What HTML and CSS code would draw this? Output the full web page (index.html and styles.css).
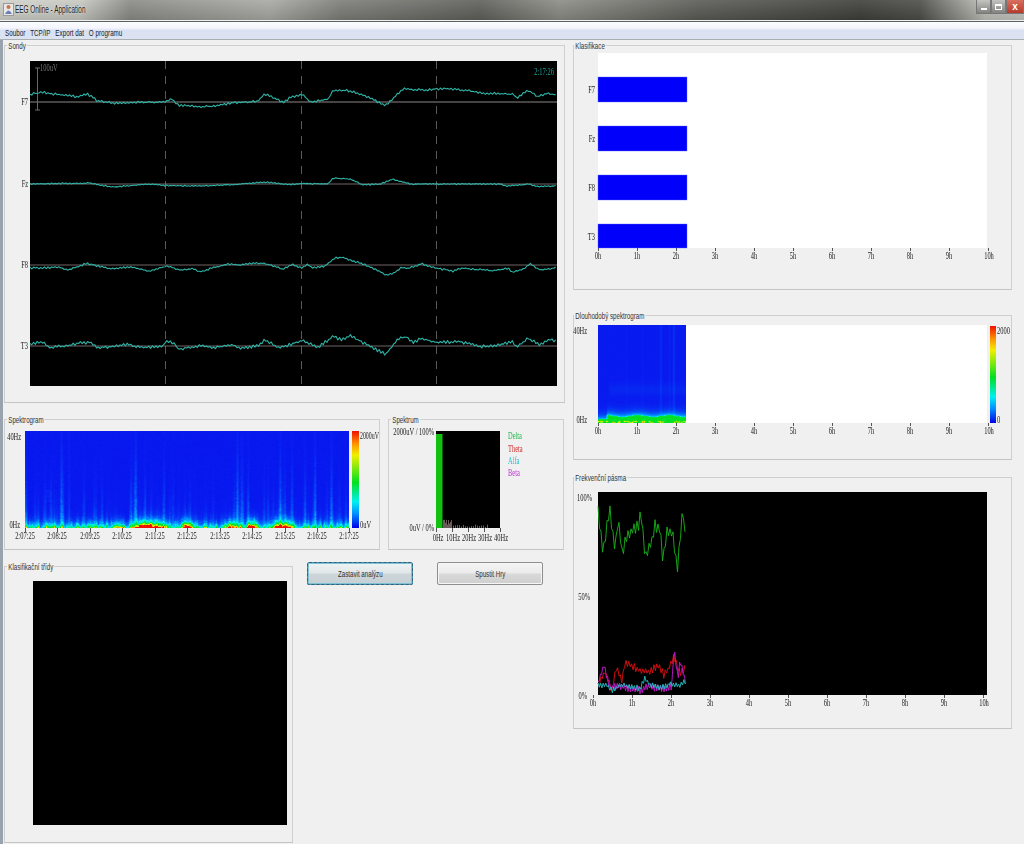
FILE: index.html
```html
<!DOCTYPE html>
<html lang="cs">
<head>
<meta charset="utf-8">
<title>EEG Online - Application</title>
<link rel="stylesheet" href="styles.css">
</head>
<body>
<div class="window">
  <header class="titlebar">
    <svg class="appicon" width="11" height="13" viewBox="0 0 11 13"><rect x="0.5" y="0.5" width="10" height="12" fill="#e8e8e8" stroke="#9a9a9a"/><circle cx="5.5" cy="4" r="2" fill="#c9764a"/><path d="M2 11 Q5.5 4 9 11Z" fill="#6a7fb5"/></svg>
    <span class="title">EEG Online - Application</span>
    <div class="winbtns">
      <span class="wb wb-min"><i class="g-min"></i></span>
      <span class="wb wb-max"><i class="g-max"></i></span>
      <span class="wb wb-close">x</span>
    </div>
  </header>
  <nav class="menubar"><div class="menu-items"><span>Soubor</span><span>TCP/IP</span><span>Export dat</span><span>O programu</span></div></nav>
  <main class="content">
    <div class="col-left">
      <section class="group g-sondy">
        <h2>Sondy</h2>
        <svg class="chart" viewBox="5 46 559 356">
          <rect x="30" y="61" width="527" height="325" fill="#000"/>
          <g class="dash"><path d="M165.5 61V386M301.5 61V386M436.5 61V386"/></g>
          <path class="base1" d="M30 102H557"/>
          <path class="base2" d="M30 184H557M30 265H557M30 346H557"/>
          <path class="scale" d="M37.5 68V110M35 68H40M35 110H40"/>
          <g id="traces"></g>
          <text class="lb r" x="28" y="105">F7</text>
          <text class="lb r" x="28" y="187">Fz</text>
          <text class="lb r" x="28" y="268">F8</text>
          <text class="lb r" x="28" y="349">T3</text>
          <text class="lb l gray" x="40" y="71">100uV</text>
          <text class="lb r teal" x="554" y="75">2:17:26</text>
        </svg>
      </section>
      <div class="row-mid">
        <section class="group g-spec">
          <h2>Spektrogram</h2>
          <svg class="chart" viewBox="5 420 374 129">
            <defs>
              <linearGradient id="jet" x1="0" y1="1" x2="0" y2="0">
                <stop offset="0" stop-color="#0000e8"/><stop offset=".15" stop-color="#0090ff"/><stop offset=".27" stop-color="#00f0f0"/><stop offset=".47" stop-color="#00e020"/><stop offset=".75" stop-color="#f0f000"/><stop offset=".87" stop-color="#ff9000"/><stop offset="1" stop-color="#f01000"/>
              </linearGradient>
            </defs>
            <foreignObject x="25" y="431" width="324" height="97"><canvas id="spec1" class="fo" width="324" height="97"></canvas></foreignObject>
            <rect x="352" y="431" width="7" height="97" fill="url(#jet)"/>
            <path class="tick" d="M25.5 528V532M57.5 528V532M90.5 528V532M122.5 528V532M155.5 528V532M187.5 528V532M220.5 528V532M252.5 528V532M285.5 528V532M317.5 528V532M349.5 528V532"/>
            <text class="lb r" x="21" y="440">40Hz</text>
            <text class="lb r" x="20" y="528">0Hz</text>
            <text class="lb l tight" x="360" y="439">2000uV</text>
            <text class="lb l" x="360" y="528">0uV</text>
            <text class="lb" x="25" y="539">2:07:25</text><text class="lb" x="57" y="539">2:08:25</text><text class="lb" x="90" y="539">2:09:25</text><text class="lb" x="122" y="539">2:10:25</text><text class="lb" x="155" y="539">2:11:25</text><text class="lb" x="187" y="539">2:12:25</text><text class="lb" x="220" y="539">2:13:25</text><text class="lb" x="252" y="539">2:14:25</text><text class="lb" x="285" y="539">2:15:25</text><text class="lb" x="317" y="539">2:16:25</text><text class="lb" x="349" y="539">2:17:25</text>
          </svg>
        </section>
        <section class="group g-spektrum">
          <h2>Spektrum</h2>
          <svg class="chart" viewBox="389 420 174 129">
            <rect x="436" y="431" width="64" height="97" fill="#000"/>
            <rect x="436" y="434" width="6.5" height="94" fill="#12c012"/>
            <path id="specbars" class="sbars" d=""/>
            <path class="tick" d="M436.5 528V532M452.5 528V532M468.5 528V532M484.5 528V532M500.5 528V532"/>
            <text class="lb r" x="434" y="435">2000uV / 100%</text>
            <text class="lb r" x="434" y="531">0uV / 0%</text>
            <text class="lb" x="438" y="541">0Hz</text><text class="lb" x="453" y="541">10Hz</text><text class="lb" x="469" y="541">20Hz</text><text class="lb" x="485" y="541">30Hz</text><text class="lb" x="501" y="541">40Hz</text>
            <text class="lb l c-delta" x="508" y="439">Delta</text>
            <text class="lb l c-theta" x="508" y="452">Theta</text>
            <text class="lb l c-alfa" x="508" y="464">Alfa</text>
            <text class="lb l c-beta" x="508" y="476">Beta</text>
          </svg>
        </section>
      </div>
      <div class="row-low">
        <section class="group g-tridy">
          <h2>Klasifikační třídy</h2>
          <div class="blackplot"></div>
        </section>
        <div class="actions">
          <button class="btn btn-focus" type="button"><span>Zastavit analýzu</span></button>
          <button class="btn" type="button"><span>Spustit Hry</span></button>
        </div>
      </div>
    </div>
    <div class="col-right">
      <section class="group g-klas">
        <h2>Klasifikace</h2>
        <svg class="chart" viewBox="574 46 437 243">
          <rect x="598" y="53" width="389" height="195" fill="#fff"/>
          <rect class="bar" x="598" y="77" width="89" height="25"/>
          <rect class="bar" x="598" y="126" width="89" height="25"/>
          <rect class="bar" x="598" y="175" width="89" height="25"/>
          <rect class="bar" x="598" y="224" width="89" height="24"/>
          <path class="tick" d="M598.5 248V251M637.5 248V251M676.5 248V251M715.5 248V251M754.5 248V251M793.5 248V251M832.5 248V251M871.5 248V251M910.5 248V251M949.5 248V251M988.5 248V251"/>
          <text class="lb r" x="595" y="93">F7</text><text class="lb r" x="595" y="142">Fz</text><text class="lb r" x="595" y="191">F8</text><text class="lb r" x="595" y="240">T3</text>
          <text class="lb" x="598" y="259">0h</text><text class="lb" x="637" y="259">1h</text><text class="lb" x="676" y="259">2h</text><text class="lb" x="715" y="259">3h</text><text class="lb" x="754" y="259">4h</text><text class="lb" x="793" y="259">5h</text><text class="lb" x="832" y="259">6h</text><text class="lb" x="871" y="259">7h</text><text class="lb" x="910" y="259">8h</text><text class="lb" x="949" y="259">9h</text><text class="lb" x="989" y="259">10h</text>
        </svg>
      </section>
      <section class="group g-long">
        <h2>Dlouhodobý spektrogram</h2>
        <svg class="chart" viewBox="574 316 437 143">
          <rect x="598" y="325" width="389" height="98" fill="#fff"/>
          <foreignObject x="598" y="325" width="88" height="98"><canvas id="spec2" class="fo" width="88" height="98"></canvas></foreignObject>
          <rect x="990" y="326" width="6" height="97" fill="url(#jet)"/>
          <path class="tick" d="M598.5 423V426M637.5 423V426M676.5 423V426M715.5 423V426M754.5 423V426M793.5 423V426M832.5 423V426M871.5 423V426M910.5 423V426M949.5 423V426M988.5 423V426"/>
          <text class="lb r" x="587" y="334">40Hz</text><text class="lb r" x="587" y="423">0Hz</text>
          <text class="lb l" x="997" y="334">2000</text><text class="lb l" x="997" y="423">0</text>
          <text class="lb" x="598" y="434">0h</text><text class="lb" x="637" y="434">1h</text><text class="lb" x="676" y="434">2h</text><text class="lb" x="715" y="434">3h</text><text class="lb" x="754" y="434">4h</text><text class="lb" x="793" y="434">5h</text><text class="lb" x="832" y="434">6h</text><text class="lb" x="871" y="434">7h</text><text class="lb" x="910" y="434">8h</text><text class="lb" x="949" y="434">9h</text><text class="lb" x="989" y="434">10h</text>
        </svg>
      </section>
      <section class="group g-freq">
        <h2>Frekvenční pásma</h2>
        <svg class="chart" viewBox="574 478 437 250">
          <rect x="598" y="492" width="389" height="203" fill="#000"/>
          <g id="bands"></g>
          <path class="tick" d="M593.5 695V698M632.5 695V698M671.5 695V698M710.5 695V698M749.5 695V698M788.5 695V698M827.5 695V698M866.5 695V698M905.5 695V698M944.5 695V698M983.5 695V698"/>
          <text class="lb r" x="592" y="501">100%</text><text class="lb r" x="590" y="600">50%</text><text class="lb r" x="587" y="699">0%</text>
          <text class="lb" x="593" y="706">0h</text><text class="lb" x="632" y="706">1h</text><text class="lb" x="671" y="706">2h</text><text class="lb" x="710" y="706">3h</text><text class="lb" x="749" y="706">4h</text><text class="lb" x="788" y="706">5h</text><text class="lb" x="827" y="706">6h</text><text class="lb" x="866" y="706">7h</text><text class="lb" x="905" y="706">8h</text><text class="lb" x="944" y="706">9h</text><text class="lb" x="984" y="706">10h</text>
        </svg>
      </section>
    </div>
  </main>
</div>
<script src="charts.js"></script>
</body>
</html>
```
FILE: styles.css
```css
* { box-sizing: border-box; }
html, body { margin: 0; padding: 0; }
body { width: 1024px; height: 844px; overflow: hidden; background: #f0f0f0; font-family: "Liberation Sans", sans-serif; font-size: 9.5px; color: #2a2a2a; }
.window { display: flex; flex-direction: column; height: 844px; }

.titlebar { display: flex; align-items: flex-start; height: 20px; padding: 3px 0 0 3px; flex: none; background:
  linear-gradient(to bottom, rgba(255,255,255,.1), rgba(0,0,0,.12)),
  linear-gradient(to right, #d2d2cc 0, #c8c8c2 80px, #8a8a86 130px, #a9a9a4 270px, #7d7d78 340px, #5f5f5a 480px, #8c8c86 560px, #5a5a55 700px, #3e3e3a 860px, #4c4c48 920px, #c0c0ba 985px, #c8c8c2 1024px); }
.appicon { flex: none; }
.title { display: inline-block; margin: 2px 0 0 1px; font-size: 10px; line-height: 10px; color: #222; text-shadow: 0 0 3px #fff; white-space: nowrap; transform: scaleX(.64); transform-origin: left center; }
.winbtns { display: flex; margin-left: auto; margin-top: -3px; height: 14px; }
.wb { display: flex; align-items: center; justify-content: center; height: 14px; width: 15px; border: 1px solid #777; border-top: 0; background: linear-gradient(to bottom, #c4c4c0, #82827e); }
.wb-close { width: 18px; background: linear-gradient(to bottom, #d8705f, #b83a2c); color: #fff; font: bold 10px "Liberation Sans", sans-serif; }
.g-min { display: block; width: 6px; height: 2px; margin-top: 5px; background: #fff; }
.g-max { display: block; width: 7px; height: 6px; border: 1px solid #fff; border-top-width: 2px; }

.menubar { flex: none; height: 19px; padding: 5px 0 0 5px; margin-top: 1px; line-height: 11px; color: #222; border-top: 1px solid #5f6163; background: linear-gradient(to bottom, #fbfcff 0, #f4f6fd 35%, #d9e1f2 50%, #dce3f3 100%); border-bottom: 1px solid #a9aeae; }
.menu-items { display: flex; gap: 7.5px; transform: scaleX(.66); transform-origin: left center; white-space: nowrap; }

.content { flex: 1; min-height: 0; display: flex; gap: 8px; padding: 5px 0 0 1px; border-left: 3px solid #98a3ad; }
.col-left { width: 561px; flex: none; display: flex; flex-direction: column; }
.col-right { width: 439px; flex: none; display: flex; flex-direction: column; }

.group { position: relative; flex: none; border: 1px solid #cfcfcf; border-bottom-color: #c4c4c4; }
.group h2 { position: absolute; left: 2px; top: -5px; margin: 0; padding: 0 2px; font-size: 9.5px; line-height: 10px; font-weight: normal; color: #333; background: #f0f0f0; white-space: nowrap; transform: scaleX(.65); transform-origin: left center; }
.col-right .group h2 { left: 0; }
.chart { display: block; width: 100%; height: 100%; overflow: visible; will-change: transform; }

.g-sondy { height: 358px; }
.row-mid { display: flex; gap: 8px; margin-top: 16px; }
.g-spec { width: 376px; height: 131px; }
.g-spektrum { width: 176px; height: 131px; }
.row-low { display: flex; align-items: flex-start; margin-top: 12px; }
.g-tridy { width: 289px; height: 277px; margin-top: 4px; padding: 14px 5px 0 28px; }
.blackplot { width: 254px; height: 244px; background: #000; }
.actions { display: flex; gap: 24px; margin-left: 14px; }
.btn { width: 106px; height: 23px; padding: 0; border: 1px solid #8e8e8e; border-radius: 2px; font: inherit; color: #333; background: linear-gradient(to bottom, #f4f4f4 0, #ececec 45%, #d8d8d8 55%, #cfcfcf 100%); box-shadow: inset 0 0 0 1px #f6f6f6; }
.btn span { display: inline-block; white-space: nowrap; transform: scaleX(.65); }
.btn-focus { border: 1px solid #3f98ad; box-shadow: inset 0 0 0 1px #7dc3d4; outline: 1px dashed #3a5f7a; outline-offset: -1px; background: linear-gradient(to bottom, #eef3f5 0, #e2e8ea 45%, #cdd5d9 55%, #c6d0d5 100%); }

.g-klas { height: 245px; }
.g-long { height: 145px; margin-top: 25px; }
.g-freq { height: 252px; margin-top: 17px; }

.lb { font-family: "Liberation Serif", serif; font-size: 9.5px; fill: #222; text-anchor: middle; transform: scaleX(.68); transform-box: fill-box; transform-origin: center; }
.lb.r { text-anchor: end; transform-origin: right center; }
.lb.l { text-anchor: start; transform-origin: left center; }
.lb.tight { transform: scaleX(.62); }
.gray { fill: #777; }
.teal { fill: #1fa59b; }
.c-delta { fill: #22b84a; }
.c-theta { fill: #d03030; }
.c-alfa { fill: #25c0d0; }
.c-beta { fill: #c030d0; }

.dash path { fill: none; stroke: #5a5a5a; stroke-width: 1; stroke-dasharray: 8 7; }
.base1 { stroke: #5e5a5a; stroke-width: 1.4; fill: none; }
.base2 { stroke: #8d7f80; stroke-width: .8; fill: none; }
.scale { stroke: #6a6a6a; stroke-width: 1; fill: none; }
.tick { stroke: #555; stroke-width: 1; fill: none; }
.bar { fill: #0000fb; stroke: #5a6cff; stroke-width: .4; }
.sbars { stroke: #6b5c5c; stroke-width: 1; fill: none; }
.fo { display: block; filter: blur(.5px); }
.trace { fill: none; stroke: #2fb3a6; stroke-width: 1.1; stroke-linejoin: round; }
.band { fill: none; stroke-width: .9; stroke-linejoin: miter; }
.band-delta { stroke: #18b41a; }
.band-theta { stroke: #e01010; }
.band-alfa { stroke: #25c4c8; }
.band-beta { stroke: #c818d0; }
```
FILE: charts.js
```js
(function () {
  var NS = 'http://www.w3.org/2000/svg';
  var seed = 12345;
  function rnd() { seed = (seed * 16807) % 2147483647; return seed / 2147483647; }
  function lerp(pts, x) {
    for (var i = 1; i < pts.length; i++) {
      if (x <= pts[i][0]) {
        var a = pts[i - 1], b = pts[i];
        return a[1] + (b[1] - a[1]) * (x - a[0]) / (b[0] - a[0]);
      }
    }
    return pts[pts.length - 1][1];
  }
  function poly(parent, cls, points) {
    var p = document.createElementNS(NS, 'polyline');
    p.setAttribute('class', cls);
    p.setAttribute('points', points.join(' '));
    parent.appendChild(p);
  }

  var F7 = [[30,94.3],[43,92.3],[53,94],[67,95.7],[77,96.7],[88,94.3],[97,100.7],[113,103.3],[133,102.3],[163,102.3],[172,99.3],[178,105],[200,106.7],[217,106],[233,102.7],[257,101.3],[265,94.3],[277,99.3],[283,102.7],[290,97.7],[302,94.3],[310,101.7],[328,99.3],[333,90.7],[350,90.7],[367,96.7],[385,105.7],[395,96.7],[403,89],[423,90],[445,88.3],[467,90.7],[487,93.3],[513,94.3],[517,98.3],[528,90],[538,96.7],[548,93.3],[557,95]];
  var Fz = [[30,184],[90,183],[100,185],[113,187],[150,184],[163,185.5],[200,186],[217,185.5],[233,184.5],[265,182],[290,184.5],[302,183.5],[328,184],[333,178.3],[350,179],[363,185],[380,184],[392,179.3],[410,184],[500,184],[505,186],[530,184],[535,186.5],[557,186]];
  var F8 = [[30,268],[40,268],[60,267.3],[68,270],[87,263.3],[100,266.7],[113,269],[130,266.7],[148,271],[163,267.3],[167,266],[180,270],[193,269],[200,271.7],[217,266.7],[228,264],[240,265.3],[255,262.7],[267,264],[283,269.3],[293,264.3],[302,268.3],[307,264],[313,268],[325,266],[335,257.7],[343,257.7],[363,264],[377,270],[386,275.3],[395,272.3],[402,267.3],[408,268.3],[422,264],[437,268.3],[453,271],[462,268.3],[493,270.7],[508,268.3],[512,272.3],[523,269.3],[530,263.3],[540,270],[557,267.7]];
  var T3 = [[30,344],[42,341.7],[50,347.7],[67,345.7],[78,343.3],[90,342.3],[97,347.7],[113,346.7],[127,344.7],[143,347.7],[163,346],[166,340.7],[175,343.3],[178,349],[200,346],[217,347.3],[233,344.3],[240,348.3],[258,345.7],[265,340],[277,346.7],[283,346.7],[302,340.7],[318,347.3],[333,336.7],[342,340],[351,335.7],[367,345],[386,354.3],[398,338.3],[407,336.7],[413,342.7],[422,338.3],[437,342.3],[460,341.7],[480,346.7],[500,345],[512,341.7],[517,346.7],[528,338.3],[540,345],[550,339],[557,341.7]];
  var g = document.getElementById('traces');
  [[F7,1.3],[Fz,.7],[F8,1],[T3,1.6]].forEach(function (t) {
    var pts = [], n = 0;
    for (var x = 30; x <= 557; x += 1.8) {
      var sign = n++ % 2 ? 1 : -1;
      pts.push(x.toFixed(2) + ',' + (lerp(t[0], x) + sign * rnd() * t[1]).toFixed(1));
    }
    poly(g, 'trace', pts);
  });

  var sb = '';
  for (var i = 0; i < 46; i += 1) {
    var bx = 443.5 + i;
    if (i % 2 && i > 8) continue;
    var hb = i < 9 ? 3 + rnd() * 6 : 1 + rnd() * 2.5;
    sb += 'M' + bx + ' 528V' + (528 - hb).toFixed(1);
  }
  document.getElementById('specbars').setAttribute('d', sb);

  var stops = [[0,0,0,225],[.04,8,28,240],[.15,0,144,255],[.27,0,240,240],[.47,0,224,32],[.75,240,240,0],[.87,255,144,0],[1,240,16,0]];
  function jet(v) {
    v = Math.max(0, Math.min(1, v));
    for (var i = 1; i < stops.length; i++) {
      if (v <= stops[i][0]) {
        var a = stops[i - 1], b = stops[i], t = (v - a[0]) / (b[0] - a[0]);
        return [a[1] + (b[1] - a[1]) * t, a[2] + (b[2] - a[2]) * t, a[3] + (b[3] - a[3]) * t];
      }
    }
    return [240, 16, 0];
  }
  function paint(id, w, h, fn) {
    var c = document.getElementById(id), ctx = c.getContext('2d');
    var img = ctx.createImageData(w, h), vals = [];
    for (var y = 0; y < h; y++) for (var x = 0; x < w; x++) vals[y * w + x] = fn(x, h - 1 - y);
    for (y = 0; y < h; y++) for (x = 0; x < w; x++) {
      var l = vals[y * w + Math.max(0, x - 1)], m = vals[y * w + x], r = vals[y * w + Math.min(w - 1, x + 1)];
      var up = vals[Math.max(0, y - 1) * w + x], dn = vals[Math.min(h - 1, y + 1) * w + x];
      var col = jet(l * .2 + m * .4 + r * .2 + up * .1 + dn * .1), o = (y * w + x) * 4;
      img.data[o] = col[0]; img.data[o + 1] = col[1]; img.data[o + 2] = col[2]; img.data[o + 3] = 255;
    }
    ctx.putImageData(img, 0, 0);
  }

  var W1 = 324, burstRaw = [], burst = [], hot = [], low = [], hots = [[120,10,1.6],[130,8,1.3],[162,5,1.5],[205,4,1],[227,5,1.6],[255,7,1.4],[262,4,1.1],[95,3,.6],[52,2,.5]];
  for (var x0 = 0; x0 < W1 + 4; x0++) burstRaw[x0] = Math.pow(rnd(), 8);
  for (var x1 = 0; x1 < W1; x1++) {
    burst[x1] = (burstRaw[x1] + burstRaw[x1 + 1] * .7 + burstRaw[x1 + 2] * .3) / 1.4;
    var hh = 0;
    hots.forEach(function (s) { var d = (x1 - s[0]) / s[1]; hh = Math.max(hh, s[2] * Math.exp(-d * d)); });
    hot[x1] = hh * (.5 + rnd() * .8);
    low[x1] = rnd() > .6 ? .35 + rnd() * .45 : .1 + rnd() * .2;
  }
  var boost = [[135,.07],[120,.04],[160,.05],[205,.04],[250,.06],[275,.055],[300,.02],[20,.02]];
  paint('spec1', W1, 97, function (x, h) {
    var v = .03 + rnd() * .009;
    var act = burst[x];
    boost.forEach(function (s) { var d = (x - s[0]) / 16; act += s[1] * Math.exp(-d * d); });
    v += act * .2 * Math.exp(-h / (8 + act * 30)) * (.6 + rnd() * .8);
    if (x > 20 && x < 26 && h > 25 && h < 38) v += .02 * rnd();
    if (x > 42 && x < 45 && h > 20) v += .012 * rnd();
    v += (low[x] + act * .3 + hot[x]) * Math.exp(-h / 3.2) * (.45 + rnd() * .9);
    return v;
  });

  var streak = { 62: .018, 63: .012, 44: .006, 71: .012, 75: .022, 76: .018, 28: .006 };
  paint('spec2', 88, 98, function (x, h) {
    var v = .036 + (streak[x] || 0) + rnd() * .004;
    var db = (h - 33) / 6;
    if (x > 10) v += .012 * Math.exp(-db * db);
    var edge = x < 9 ? 3 : 6.5 + .8 * Math.sin(x / 5);
    var d = h - edge;
    if (d > 0) v += .16 * Math.exp(-d / 3.5);
    else v = .44 + rnd() * .05;
    if (h < 2 && rnd() > .8) v = .8 + rnd() * .2;
    return v;
  });

  var greenCtl = [[598,513],[600,530],[603,550],[610,510],[615,550],[618,518],[622,553],[627,537],[632,530],[638,527],[641,513],[645,557],[652,540],[655,525],[660,530],[663,560],[667,533],[672,530],[677,570],[678,560],[683,507],[686,552]];
  var redCtl = [[598,685],[605,672],[612,690],[616,668],[622,680],[625,663],[640,670],[650,672],[658,665],[664,675],[669,668],[674,657],[680,673],[686,668]];
  var magCtl = [[598,683],[604,665],[610,688],[618,686],[630,688],[640,690],[650,686],[660,689],[672,686],[674,648],[678,678],[680,660],[686,683]];
  var cyanCtl = [[598,686],[606,684],[612,691],[620,685],[640,688],[645,678],[650,685],[660,688],[670,684],[680,686],[686,680]];
  var bands = document.getElementById('bands');
  function band(ctl, cls, amp, step) {
    var pts = [], n = 0;
    for (var x = 598; x <= 686; x += step) {
      var sign = n++ % 2 ? 1 : -1;
      pts.push(x.toFixed(1) + ',' + Math.min(694.5, lerp(ctl, x) + sign * (.3 + rnd() * .7) * amp).toFixed(1));
    }
    poly(bands, 'band ' + cls, pts);
  }
  band(greenCtl, 'band-delta', 7, 1.5);
  band(redCtl, 'band-theta', 4, 1.4);
  band(magCtl, 'band-beta', 4, 1.2);
  band(cyanCtl, 'band-alfa', 3, 1.3);
})();
```
